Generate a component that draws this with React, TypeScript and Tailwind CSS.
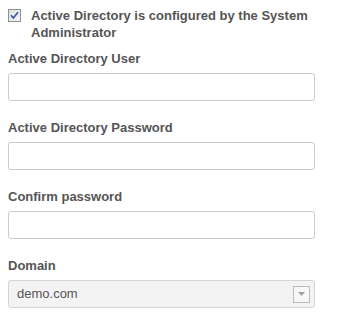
import React from 'react';

const Field: React.FC<{ label: string }> = ({ label }) => (
  <div className="flex flex-col">
    <label className="text-[13px] font-bold leading-[15px] text-[#555555]">{label}</label>
    <input
      type="text"
      className="mt-[7px] h-[28px] w-[307px] rounded-[3px] border border-[#cccccc] bg-white px-2 outline-none"
    />
  </div>
);

const App: React.FC = () => {
  return (
    <div className="min-h-screen bg-white pl-[8px] pt-[7px] font-['Liberation_Sans',Arial,sans-serif]">
      <div className="flex items-start">
        <svg width="13" height="13" viewBox="0 0 13 13" className="mt-[2px] shrink-0">
          <defs>
            <linearGradient id="cb" x1="0" y1="0" x2="1" y2="1">
              <stop offset="0" stopColor="#dcdde3" />
              <stop offset="1" stopColor="#f6f6f8" />
            </linearGradient>
          </defs>
          <rect x="0.5" y="0.5" width="12" height="12" fill="url(#cb)" stroke="#8e8f8f" />
          <path d="M3 6.3 L5.3 9 L10 3.3" fill="none" stroke="#3457a6" strokeWidth="1.6" />
        </svg>
        <span className="ml-[10px] w-[295px] text-[13px] font-bold leading-[17px] text-[#555555]">
          Active Directory is configured by the System Administrator
        </span>
      </div>

      <div className="mt-[10px] flex flex-col gap-[19px]">
        <Field label="Active Directory User" />
        <Field label="Active Directory Password" />
        <Field label="Confirm password" />
        <div className="flex flex-col">
          <label className="text-[13px] font-bold leading-[15px] text-[#555555]">Domain</label>
          <div className="mt-[7px] flex h-[28px] w-[307px] items-center justify-between rounded-[3px] border border-[#d4d4d4] bg-[#f3f3f3] pl-[8px] pr-[4px]">
            <span className="text-[13px] text-[#555555]">demo.com</span>
            <div className="flex h-[17px] w-[17px] items-center justify-center border border-[#bbbbbb] bg-[#f7f7f7]">
              <svg width="7" height="4" viewBox="0 0 7 4">
                <path d="M0 0 H7 L3.5 4 Z" fill="#a0a0a0" />
              </svg>
            </div>
          </div>
        </div>
      </div>
    </div>
  );
};

export default App;
